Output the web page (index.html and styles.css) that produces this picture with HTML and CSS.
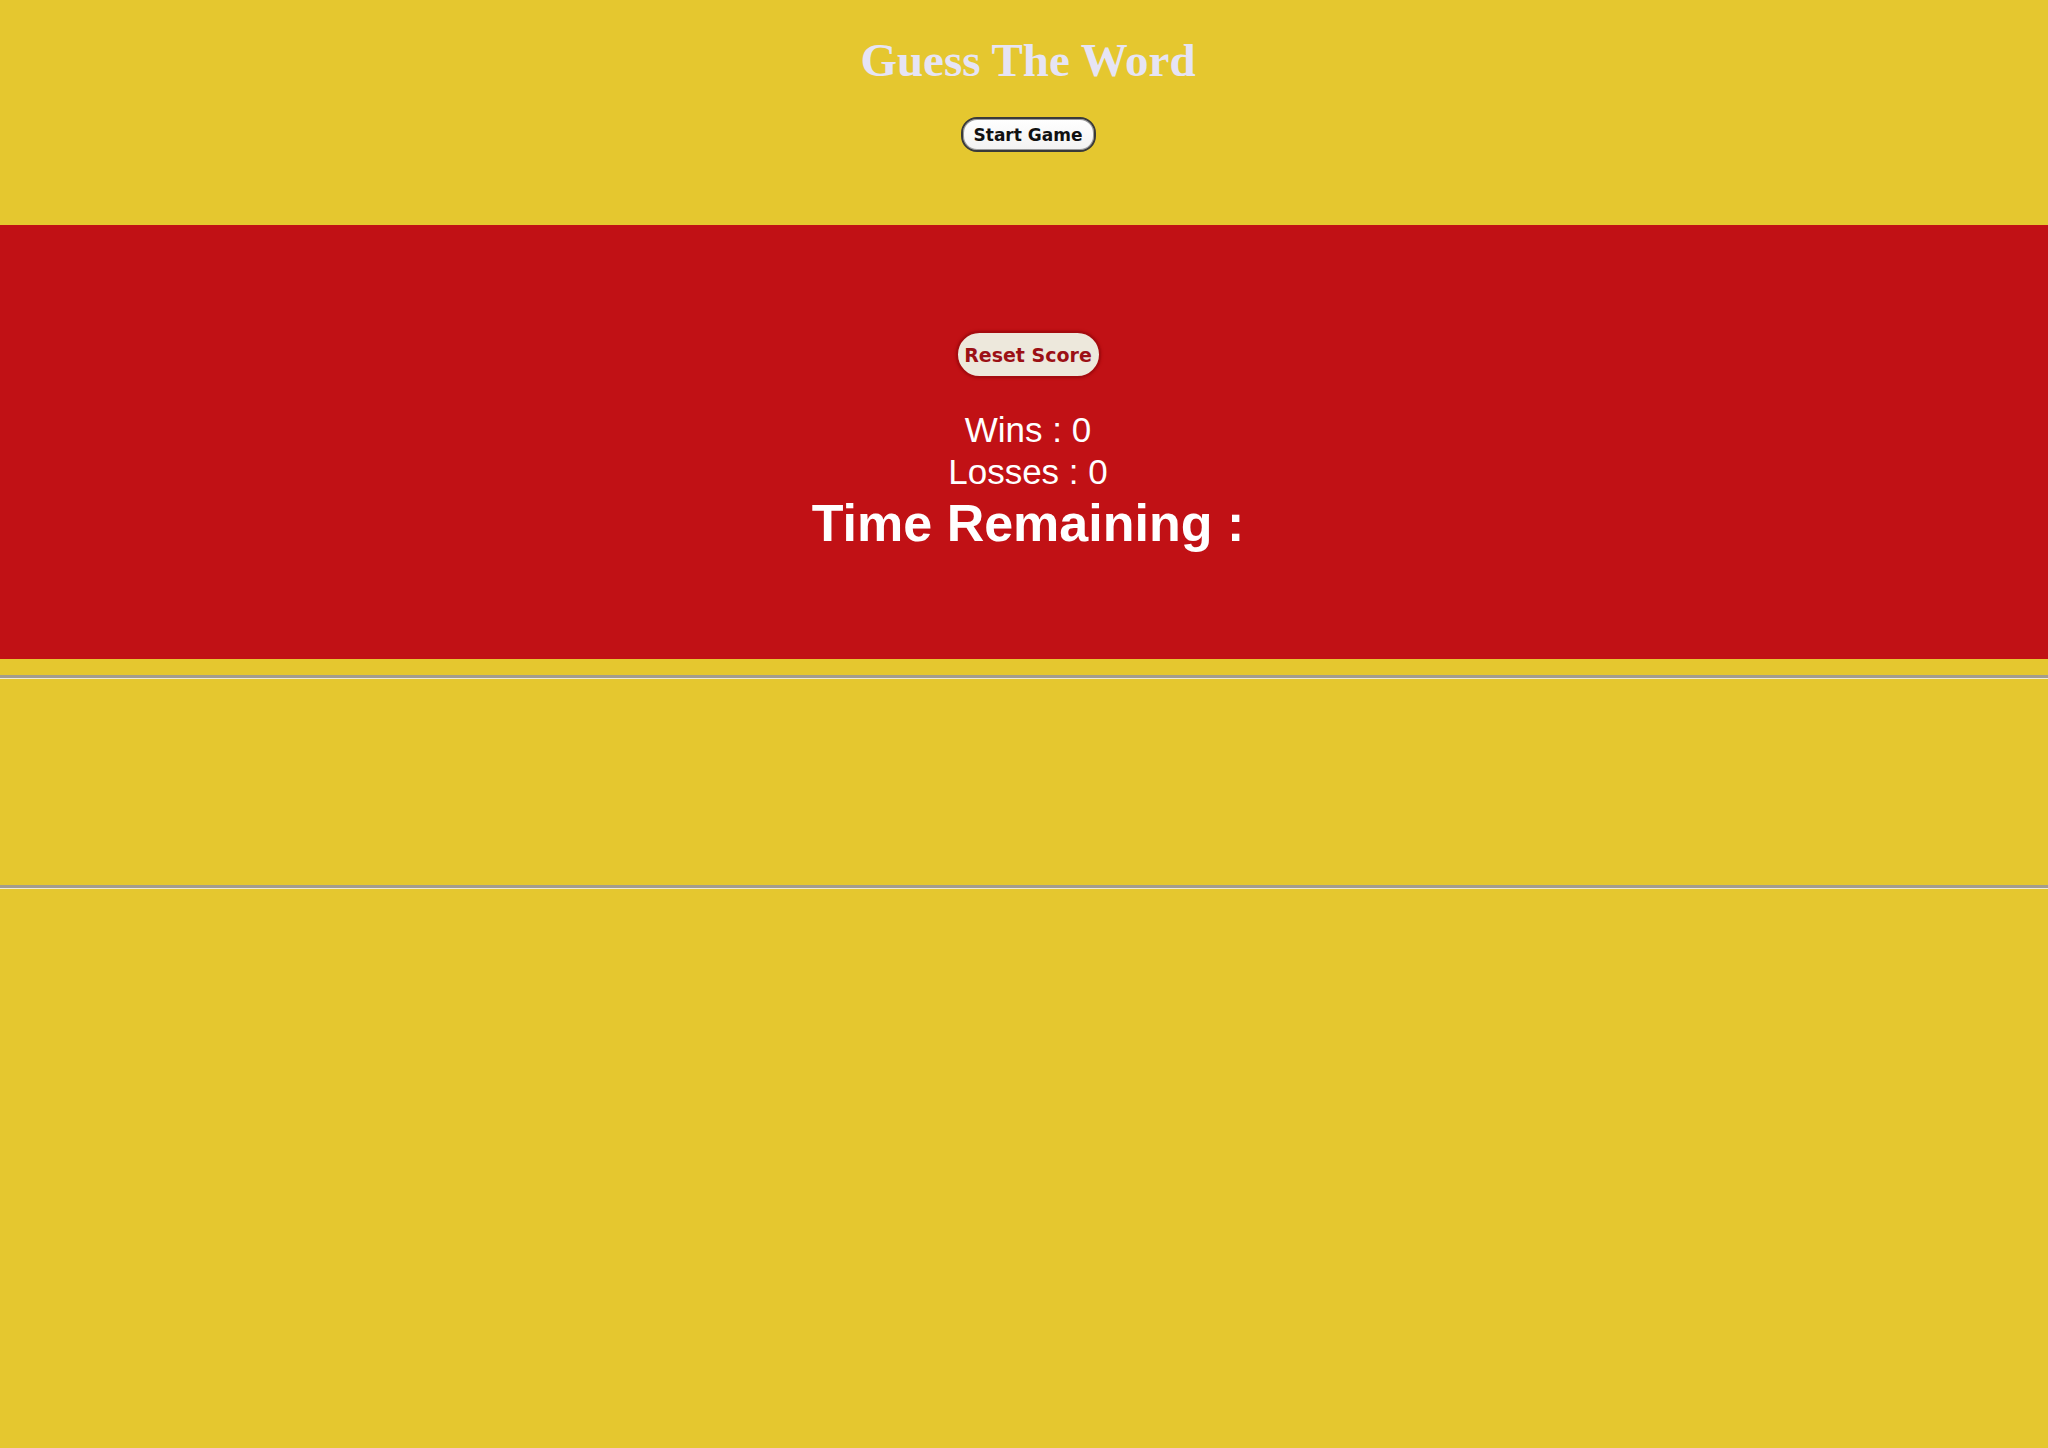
FILE: index.html
```html
<!DOCTYPE html>
<html>
<head>
<meta charset="utf-8">
<title>Guess The Word</title>
<link rel="stylesheet" href="styles.css">
</head>
<body>
<header class="top">
  <h1 class="title">Guess The Word</h1>
  <button class="start-btn">Start Game</button>
</header>
<section class="scoreboard">
  <button class="reset-btn">Reset Score</button>
  <div class="stat">Wins : 0</div>
  <div class="stat">Losses : 0</div>
  <div class="timer">Time Remaining :</div>
</section>
<hr class="rule">
<div class="word-area"></div>
<hr class="rule">
</body>
</html>
```
FILE: styles.css
```css
html, body {
  margin: 0;
  padding: 0;
}
body {
  background: #e5c72f;
  text-align: center;
  font-family: "Liberation Sans", Arial, sans-serif;
  min-height: 1448px;
}
.top {
  box-sizing: border-box;
  height: 225px;
  padding-top: 33px;
  padding-left: 8px;
  display: flex;
  flex-direction: column;
  align-items: center;
}
.title {
  margin: 0;
  font-family: "Liberation Serif", "Times New Roman", serif;
  font-weight: bold;
  font-size: 47px;
  line-height: 54px;
  color: #e6e4f4;
}
.start-btn {
  margin-top: 30px;
  box-sizing: border-box;
  width: 135px;
  height: 35px;
  border-radius: 16px;
  border: 2px solid #3a3a3a;
  background: linear-gradient(#ffffff, #f2f2f2);
  box-shadow: inset 0 0 0 1px #9a9a9a;
  font-family: "Comic Sans MS", "DejaVu Sans", sans-serif;
  font-weight: bold;
  font-size: 17px;
  color: #111;
  padding: 0;
}
.scoreboard {
  box-sizing: border-box;
  height: 434px;
  background: #c11115;
  padding-top: 106px;
  padding-left: 8px;
  display: flex;
  flex-direction: column;
  align-items: center;
  color: #ffffff;
}
.reset-btn {
  box-sizing: border-box;
  width: 145px;
  height: 47px;
  border-radius: 24px;
  border: 2px solid #a50b0f;
  background: #ede8dc;
  box-shadow: 0 0 2px 1px #b00c10;
  font-family: "DejaVu Sans", Verdana, sans-serif;
  font-weight: bold;
  font-size: 19px;
  color: #9c1015;
  padding: 0;
  margin-bottom: 31px;
}
.stat {
  font-size: 35px;
  line-height: 42px;
}
.timer {
  font-size: 52px;
  line-height: 60px;
  font-weight: bold;
}
.rule {
  margin: 16px 0 0 0;
  height: 0;
  border: 0;
  border-top: 3px solid #a39d8e;
  border-bottom: 1px solid #f1ecd6;
}
.word-area {
  height: 190px;
}
```
